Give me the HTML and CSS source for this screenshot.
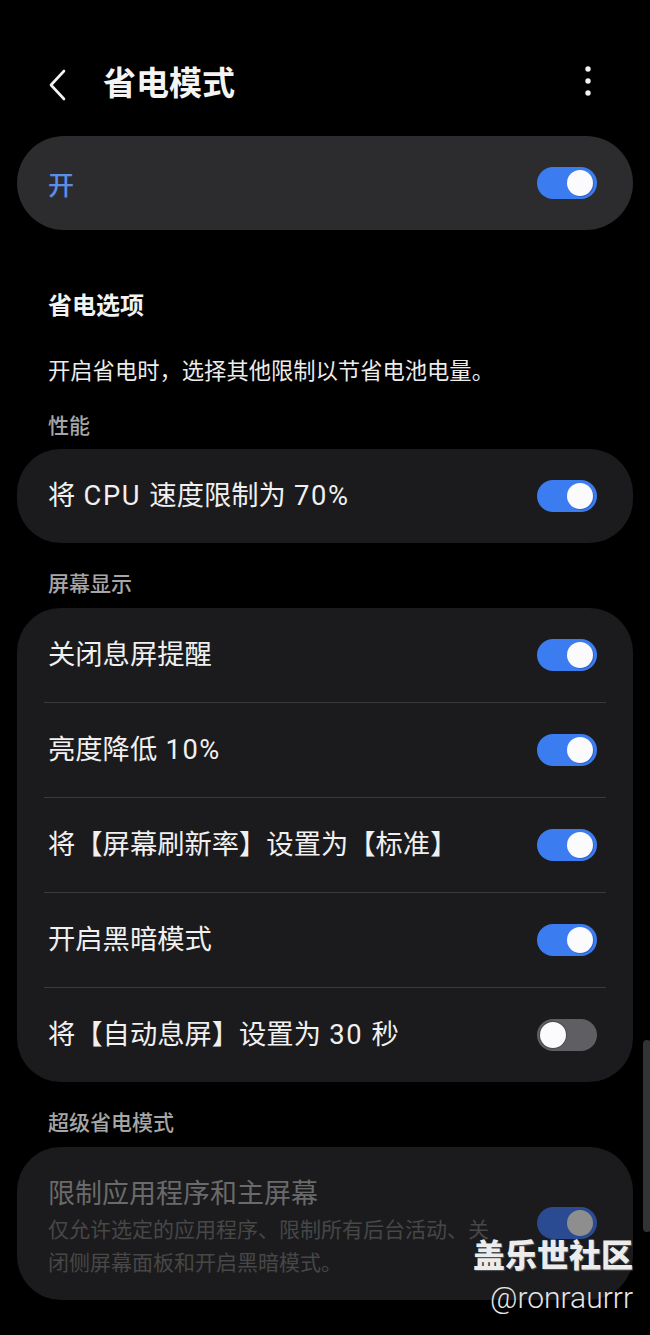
FILE: index.html
```html
<!DOCTYPE html>
<html lang="zh-CN">
<head>
<meta charset="utf-8">
<title>省电模式</title>
<link rel="stylesheet" href="styles.css">
</head>
<body>
<div class="page">
  <header class="topbar">
    <svg class="back" width="24" height="34" viewBox="0 0 24 34"><path d="M18 3 L5 17 L18 31" fill="none" stroke="#f2f2f2" stroke-width="2.6" stroke-linecap="round" stroke-linejoin="round"/></svg>
    <h1 class="title">省电模式</h1>
    <svg class="more" width="10" height="34" viewBox="0 0 10 34"><circle cx="5" cy="5" r="2.7" fill="#f2f2f2"/><circle cx="5" cy="17" r="2.7" fill="#f2f2f2"/><circle cx="5" cy="29" r="2.7" fill="#f2f2f2"/></svg>
  </header>

  <section class="card card-master">
    <div class="row">
      <span class="master-label">开</span>
      <span class="toggle on"></span>
    </div>
  </section>

  <h2 class="section-title">省电选项</h2>
  <p class="desc">开启省电时，选择其他限制以节省电池电量。</p>

  <h3 class="subhead sub-perf">性能</h3>
  <section class="card">
    <div class="row"><span class="label">将 <span class="latin">CPU</span> 速度限制为 <span class="latin">70%</span></span><span class="toggle on"></span></div>
  </section>

  <h3 class="subhead">屏幕显示</h3>
  <section class="card">
    <div class="row"><span class="label">关闭息屏提醒</span><span class="toggle on"></span></div>
    <div class="sep"></div>
    <div class="row"><span class="label">亮度降低 <span class="latin">10%</span></span><span class="toggle on"></span></div>
    <div class="sep"></div>
    <div class="row"><span class="label">将【屏幕刷新率】设置为【标准】</span><span class="toggle on"></span></div>
    <div class="sep"></div>
    <div class="row"><span class="label">开启黑暗模式</span><span class="toggle on"></span></div>
    <div class="sep"></div>
    <div class="row"><span class="label">将【自动息屏】设置为 <span class="latin">30</span> 秒</span><span class="toggle off"></span></div>
  </section>

  <h3 class="subhead">超级省电模式</h3>
  <section class="card card-dim">
    <div class="dim-row">
      <div class="dim-text">
        <div class="dim-title">限制应用程序和主屏幕</div>
        <div class="dim-desc">仅允许选定的应用程序、限制所有后台活动、关闭侧屏幕面板和开启黑暗模式。</div>
      </div>
      <span class="toggle dimmed"></span>
    </div>
  </section>

  <div class="scrollbar"></div>
  <div class="watermark">
    <div class="wm-main">盖乐世社区</div>
    <div class="wm-sub">@ronraurrr</div>
  </div>
</div>
</body>
</html>
```

FILE: styles.css
```css
* { box-sizing: border-box; }
html, body { margin: 0; padding: 0; background: #000; }
body {
  font-family: Roboto, "Noto Sans CJK SC", "Noto Sans", sans-serif;
  color: #f2f2f2;
}
.page {
  position: relative;
  width: 650px;
  height: 1335px;
  overflow: hidden;
  background: #000;
}
.topbar {
  display: flex;
  align-items: center;
  height: 72px;
  margin-top: 48px;
  margin-bottom: 16px;
  padding: 0 57px 0 46px;
}
.back { flex: none; margin-top: 2px; }
.title {
  margin: 0 0 0 33px;
  font-size: 33px;
  font-weight: 700;
  line-height: 40px;
  flex: 1;
  color: #f4f4f4;
}
.more { flex: none; margin-top: -6px; }

.card {
  margin: 0 17px;
  background: #1b1b1d;
  border-radius: 44px;
  overflow: hidden;
}
.card-master {
  background: #2c2c2e;
  border-radius: 47px;
}
.row {
  display: flex;
  align-items: center;
  justify-content: space-between;
  height: 94px;
  padding: 0 36px 0 31px;
}
.master-label {
  font-size: 26px;
  color: #5b8de9;
  font-weight: 500;
}
.label {
  font-size: 27.3px;
  color: #f0f0f0;
  line-height: 34px;
  word-spacing: 1.5px;
}
.latin {
  letter-spacing: 1.6px;
}
.sep {
  height: 1px;
  margin: 0 27px;
  background: #3a3a3c;
}

.section-title {
  margin: 61px 0 0 48px;
  font-size: 24px;
  line-height: 30px;
  font-weight: 700;
  color: #f2f2f2;
}
.desc {
  margin: 35px 0 0 48px;
  font-size: 22.3px;
  line-height: 30px;
  color: #ececec;
}
.subhead {
  margin: 27px 0 10px 48px;
  font-size: 21px;
  line-height: 28px;
  font-weight: 500;
  color: #a6a6a6;
}
.sub-perf { margin-top: 26px; margin-bottom: 9px; }

.toggle {
  position: relative;
  flex: none;
  width: 60px;
  height: 32px;
  border-radius: 16px;
}
.toggle::after {
  content: "";
  position: absolute;
  top: 3px;
  width: 26px;
  height: 26px;
  border-radius: 50%;
  background: #fbfbfd;
}
.toggle.on { background: #3b7cf0; }
.toggle.on::after { right: 4px; box-shadow: 1px 1px 0 #2f64c9; }
.toggle.off { background: #5f5f63; }
.toggle.off::after { left: 3px; box-shadow: 0 0 0 1px #4c4c50; }
.toggle.dimmed { background: #2a4b92; }
.toggle.dimmed::after { right: 4px; background: #8e8e8e; }

.card-dim { border-radius: 44px; }
.dim-row {
  display: flex;
  align-items: center;
  justify-content: space-between;
  padding: 29px 36px 20px 31px;
  height: 153px;
}
.dim-text { width: 452px; }
.dim-title {
  font-size: 27px;
  line-height: 34px;
  color: #6a6a6a;
  margin-bottom: 3px;
}
.dim-desc {
  font-size: 21px;
  line-height: 33px;
  color: #474747;
}
.toggle.dimmed { margin-top: -10px; }

.scrollbar {
  position: absolute;
  left: 643px;
  top: 1040px;
  width: 8px;
  height: 192px;
  border-radius: 4px;
  background: #333335;
}
.watermark {
  position: absolute;
  right: 17px;
  top: 1232px;
  text-align: right;
}
.wm-main {
  font-family: "Noto Sans CJK SC", sans-serif;
  font-size: 32px;
  line-height: 42px;
  font-weight: 900;
  color: #ececec;
  text-shadow: 1px 1px 1px #555;
}
.wm-sub {
  font-family: Roboto, "Noto Sans", sans-serif;
  font-size: 30px;
  line-height: 36px;
  font-weight: 300;
  color: #e6e6e6;
  margin-top: 6px;
}
```
